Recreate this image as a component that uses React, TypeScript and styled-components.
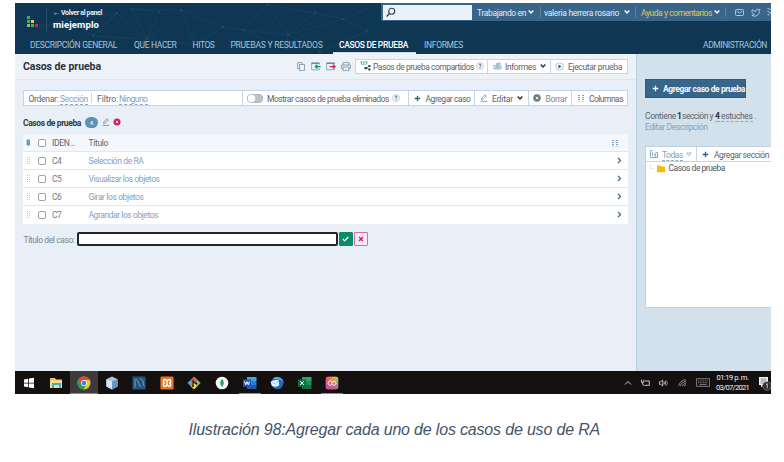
import React, { useLayoutEffect, useRef } from "react";
import styled, { createGlobalStyle, css } from "styled-components";

const Global = createGlobalStyle`
  * { box-sizing: border-box; }
  body { margin: 0; background: #fff; font-family: Roboto, "Liberation Sans", sans-serif; }
`;

const Label = styled.span<{ $w: number; $size?: number; $color?: string; $weight?: number; $ml?: number; $dotted?: boolean; $flush?: boolean }>`
  display: block;
  flex: none;
  width: ${(p) => p.$w}px;
  margin-left: ${(p) => p.$ml ?? 0}px;
  padding-top: ${(p) => (p.$flush ? 0 : 1)}px;
  font-size: ${(p) => p.$size ?? 8.5}px;
  line-height: 10px;
  font-weight: ${(p) => p.$weight ?? 400};
  color: ${(p) => p.$color ?? "#5c646c"};
  white-space: nowrap;
  ${(p) => p.$dotted && css`border-bottom: 1px dashed #8fa9c6; margin-bottom: -1px;`}
`;

type FitProps = React.ComponentProps<typeof Label> & { children: string };

/* Spreads the letters so that the text fills its label's width. */
function Fit({ children, ...rest }: FitProps) {
  const ref = useRef<HTMLSpanElement>(null);
  useLayoutEffect(() => {
    const el = ref.current;
    if (!el) return;
    el.style.letterSpacing = "0px";
    const natural = el.getBoundingClientRect().width;
    el.style.letterSpacing = `${(rest.$w - natural) / children.length}px`;
  }, [children, rest.$w]);
  return (
    <Label {...rest}>
      <span ref={ref}>{children}</span>
    </Label>
  );
}

const Page = styled.main`
  width: 784px;
  height: 462px;
  padding: 3px 13px 0 15px;
  overflow: hidden;
`;
const Screen = styled.div`
  width: 756px;
  height: 391px;
  overflow: hidden;
  display: flex;
  flex-direction: column;
`;
const Header = styled.header`
  position: relative;
  height: 51px;
  flex: none;
  background: #0f3754;
  display: flex;
  flex-direction: column;
  justify-content: space-between;
`;
const Mesh = styled.svg`
  position: absolute;
  inset: 0;
`;
const TopRow = styled.div`
  position: relative;
  display: flex;
  justify-content: space-between;
  height: 31px;
`;
const Brand = styled.div`
  display: flex;
  padding: 5px 0 0 12px;
`;
const Logo = styled.svg`
  display: block;
  flex: none;
  margin-top: 8px;
`;
const BrandText = styled.div`
  border-left: 1px solid #294d68;
  margin-left: 7px;
  padding-left: 6px;
  height: 25px;
`;
const Project = styled.div`
  margin-top: 2px;
`;
const UserBar = styled.div`
  display: flex;
  align-items: center;
  width: 390px;
  height: 18px;
  padding-left: 2px;
  background: #386589;
  overflow: hidden;
`;
const Search = styled.div`
  width: 89px;
  height: 15px;
  padding: 2px 3px;
  flex: none;
  background: #e9f1f9;
`;
const Sep = styled.i<{ $ml: number; $mr: number; $color?: string }>`
  flex: none;
  width: 1px;
  height: 10px;
  margin: 0 ${(p) => p.$mr}px 0 ${(p) => p.$ml}px;
  background: ${(p) => p.$color ?? "#5c83a2"};
`;
const Icon = styled.svg<{ $ml?: number }>`
  display: block;
  flex: none;
  margin-left: ${(p) => p.$ml ?? 0}px;
`;
const Nav = styled.nav`
  position: relative;
  display: flex;
  height: 19px;
  padding-left: 15px;
`;
const Tab = styled.div<{ $ml?: number; $active?: boolean }>`
  display: flex;
  align-items: center;
  padding-bottom: 1px;
  height: 19px;
  margin-left: ${(p) => p.$ml ?? 0}px;
  ${(p) => p.$active && css`padding: 0 8px 0 6px; border-bottom: 1px solid #f4f8fc; box-shadow: inset 0 -1px #c7d5e1;`}
`;
const Body = styled.div`
  display: flex;
  height: 317px;
  flex: none;
`;
const Main = styled.section`
  width: 622px;
  background: #e8eff6;
  border-right: 1px solid #b9d0e0;
`;
const TitleBar = styled.div`
  display: flex;
  align-items: center;
  height: 26px;
  padding: 0 8px 1px 8px;
  background: #edf2f8;
  border-bottom: 1px solid #dde6ef;
`;
const Group = styled.div<{ $ml?: number; $tall?: boolean }>`
  display: flex;
  flex: none;
  height: ${(p) => (p.$tall ? 16 : 15)}px;
  margin-left: ${(p) => p.$ml ?? 0}px;
  border: 1px solid #c3d6e6;
  background: #fff;
`;
const Cell = styled.div<{ $w: number; $pl: number }>`
  display: flex;
  align-items: center;
  flex: none;
  width: ${(p) => p.$w}px;
  padding-left: ${(p) => p.$pl}px;
  &:not(:last-child) { border-right: 1px solid #c3d6e6; }
`;
const ToolRow = styled.div`
  padding: 10px 8px 0;
  height: 26px;
`;
const SectionHead = styled.div`
  display: flex;
  align-items: center;
  height: 28px;
  padding: 4px 0 0 8px;
`;
const Badge = styled.span`
  width: 13px;
  height: 11px;
  margin-left: 4px;
  border-radius: 6px;
  background: #5c92ba;
  color: #e3edf5;
  font-size: 6px;
  font-weight: 700;
  line-height: 11px;
  text-align: center;
`;
const Table = styled.div`
  margin: 0 8px;
`;
const Row = styled.div<{ $head?: boolean }>`
  display: flex;
  align-items: center;
  height: 18px;
  padding-left: 3px;
  background: ${(p) => (p.$head ? "#f4f8fd" : "#fff")};
  border-bottom: 1px solid #e0e9f1;
  &:last-child { border-bottom-color: #fff; }
`;
const Check = styled.span`
  width: 8px;
  height: 8px;
  flex: none;
  border: 1px solid #9ea2a7;
  border-radius: 2px;
  background: #fff;
`;
const Lead = styled.span`
  display: flex;
  width: 12px;
  flex: none;
`;
const Ident = styled.span`
  display: flex;
  width: 36.5px;
  margin-left: 6px;
  flex: none;
`;
const End = styled.span<{ $mr: number }>`
  display: flex;
  margin-left: auto;
  margin-right: ${(p) => p.$mr}px;
`;
const FormRow = styled.div`
  display: flex;
  align-items: center;
  height: 14px;
  margin: 8px 0 0 8.5px;
`;
const Field = styled.div`
  width: 261px;
  height: 14px;
  margin-left: 2px;
  border: 2px solid #20252b;
  border-radius: 2px;
  background: #fff;
`;
const SquareButton = styled.div<{ $ok?: boolean }>`
  display: flex;
  align-items: center;
  justify-content: center;
  width: 14px;
  height: 14px;
  margin-left: 1px;
  border-radius: 1px;
  border: 1px solid ${(p) => (p.$ok ? "#0b8a66" : "#d76e9d")};
  background: ${(p) => (p.$ok ? "#0b8a66" : "#faeaf4")};
`;
const Side = styled.aside`
  width: 134px;
  padding: 25px 0 0 8px;
  background: #d2e1eb;
`;
const AddButton = styled.div`
  display: flex;
  align-items: center;
  width: 101px;
  height: 19px;
  padding-left: 6px;
  background: #38658a;
  border: 1px solid #2f5a7d;
`;
const Info = styled.div`
  display: flex;
  align-items: center;
  height: 11px;
`;
const InfoBlock = styled.div`
  padding-top: 12px;
  height: 48px;
`;
const Tree = styled.div`
  height: 162px;
  background: #fff;
  border: 1px solid #bdd1e0;
  border-right: 0;
`;
const TreeTools = styled.div`
  display: flex;
  height: 15px;
  border-bottom: 1px solid #c3d6e6;
`;
const TreeItem = styled.div`
  display: flex;
  align-items: center;
  height: 12px;
  padding-left: 4px;
`;
const Taskbar = styled.footer`
  display: flex;
  height: 23px;
  background: #13100f;
`;
const Task = styled.div<{ $active?: boolean; $line?: boolean }>`
  display: flex;
  flex: none;
  align-items: center;
  justify-content: center;
  width: 27.6px;
  height: 23px;
  padding-top: 1px;
  background: ${(p) => (p.$active ? "linear-gradient(#c65fc0, #c65fc0) bottom / 100% 1px no-repeat #3d3b3c" : "none")};
  ${(p) => p.$line && css`background: linear-gradient(#c65fc0, #c65fc0) center bottom / 22px 1px no-repeat;`}
`;
const Tray = styled.div`
  display: flex;
  align-items: center;
  margin-left: auto;
  width: 150px;
  flex: none;
`;
const Clock = styled.div`
  display: flex;
  flex-direction: column;
  margin-left: 6px;
  align-items: center;
`;
const Caption = styled.p`
  margin: 31px 0 0 173.5px;
  font-family: "Liberation Sans", Arial, sans-serif;
  font-style: italic;
  line-height: 20px;
`;

const blue = "#7f9fc6";
const sky = "#a9c3d8";

const Caret = ({ ml, color = "#fff" }: { ml: number; color?: string }) => (
  <Icon $ml={ml} width="6" height="6" viewBox="0 0 6 6"><path d="M.7 1.5 3 4l2.3-2.5" fill="none" stroke={color} strokeWidth="1.4" /></Icon>
);
const Plus = ({ color = "#2f5f86" }: { color?: string }) => (
  <Icon width="7" height="7" viewBox="0 0 7 7"><path d="M3.5.7v5.6M.7 3.5h5.6" stroke={color} strokeWidth="1.3" /></Icon>
);
const Help = ({ ml }: { ml: number }) => (
  <Icon $ml={ml} width="8" height="8" viewBox="0 0 8 8">
    <circle cx="4" cy="4" r="3.5" fill="#f8fbfd" stroke="#a9c0d3" strokeWidth=".7" />
    <path d="M2.9 3.2C2.9 1.7 5.1 1.8 5 3.1 5 3.8 4 3.8 4 4.7M4 5.4v.8" fill="none" stroke="#294c6a" strokeWidth=".9" />
  </Icon>
);
const Pencil = ({ ml = 0 }: { ml?: number }) => (
  <Icon $ml={ml} width="8" height="8" viewBox="0 0 8 8" fill="none" stroke="#6d9ac0" strokeWidth=".9">
    <path d="m1.5 5 .4-1.2L5 .8l1.3 1.1-3.2 3.3-1.7.5zM.5 7.4h6.8" />
  </Icon>
);
const Columns = () => (
  <Icon width="8" height="8" viewBox="0 0 8 8" fill="#7ba1c2">
    {[1, 3, 5].map((y) => <path key={y} d={`M1 ${y}h2v1H1zM5 ${y}h2v1H5z`} />)}
    <path d="M1 7h2v.5H1zM5 7h2v.5H5z" />
  </Icon>
);
const CrossDisc = ({ ml = 0, color, r = 3.4 }: { ml?: number; color: string; r?: number }) => (
  <Icon $ml={ml} width="8" height="8" viewBox="0 0 8 8">
    <circle cx="4" cy="4" r={r} fill={color} /><path d="m2.8 2.8 2.4 2.4m0-2.4L2.8 5.2" stroke="#fff" strokeWidth=".9" />
  </Icon>
);
const Grip = () => (
  <Icon width="5" height="7" viewBox="0 0 5 7" fill="#b4cade">
    {[0, 2, 4, 6].map((y) => <path key={y} d={`M1 ${y}h1v1h-1zM3 ${y}h1v1h-1z`} />)}
  </Icon>
);
const Window = ({ accent, out, ml }: { accent: string; out?: boolean; ml: number }) => (
  <Icon $ml={ml} width="10" height="9" viewBox="0 0 10 9" fill="none">
    <path d="M8.4 2.6V.8H.6v7h7.800V6.200" stroke="#7f9bb2" strokeWidth=".8" /><path d="M.6 1.4h7.800" stroke="#688ba8" strokeWidth="1.3" />
    <path d={out ? "M3.7 4.6h5M7 2.8l2 1.8-2 1.8" : "M9.6 4.6h-5M6.4 2.8l-2 1.8 2 1.8"} stroke={accent} strokeWidth="1.3" />
  </Icon>
);

const meshPoints = [[52, 17], [102, 10], [117, 6], [144, 9], [132, 36], [166, 7], [181, 42], [208, 24], [228, 27], [252, 2], [273, 32], [300, 10], [328, 16], [352, 28], [272, 45], [305, 49], [78, 33]];
const meshLines = "M20 25 52 17 102 10 78 33 132 36 117 6 144 9 132 36 166 7 181 42 208 24 166 7M208 24 228 27 252 2 273 32 228 27 272 45 273 32 328 16 300 10 252 2M300 10 273 32M328 16 352 28 305 49 273 32M52 17 78 33 102 10 132 36 181 42M328 16 365 0M117 6 166 7";

const rows = [
  { id: "C4", title: "Selección de RA", w: 55 },
  { id: "C5", title: "Visualizar los objetos", w: 71 },
  { id: "C6", title: "Girar los objetos", w: 55 },
  { id: "C7", title: "Agrandar los objetos", w: 69.5 },
];

const TaskSvg = ({ children }: { children: React.ReactNode }) => <Icon width="14" height="14" viewBox="0 0 14 14">{children}</Icon>;

function Office({ color, light, mid, path }: { color: string; light: string; mid: string; path: string }) {
  return (
    <TaskSvg>
      <path d="M4 1h9.5v4H4z" fill={light} /><path d="M4 5h9.5v4H4z" fill={mid} /><path d="M4 9h9.5v4H4z" fill={color} />
      <path d="M0 3.4h8v7.4H0z" fill={color} /><path d={path} fill="none" stroke="#fff" strokeWidth="1" />
    </TaskSvg>
  );
}

export default function App() {
  return (
    <Page>
      <Global />
      <Screen>
        <Header>
          <Mesh width="380" height="51" viewBox="0 0 380 51">
            <path d={meshLines} fill="none" stroke="#2b5673" strokeWidth=".5" opacity=".5" />
            {meshPoints.map(([x, y]) => <circle key={`${x}-${y}`} cx={x} cy={y} r="1" fill="#34617e" opacity=".5" />)}
          </Mesh>
          <TopRow>
            <Brand>
              <Logo width="12" height="12" viewBox="0 0 12 12">
                <path d="M0 0h3v3H0zM0 4h3v3H0zM4 8h3v3H4z" fill="#43ad55" /><path d="M0 8h3v3H0z" fill="#87c451" />
                <path d="M4 4h3v3H4z" fill="#e9c93f" /><path d="M8 8h3v3H8z" fill="#d51d58" />
              </Logo>
              <BrandText>
                <Fit $flush $w={49} $size={7} $weight={700} $color="#e3ecf4">← Volver al panel</Fit>
                <Project><Fit $flush $w={46} $size={9.5} $weight={700} $color="#fff">miejemplo</Fit></Project>
              </BrandText>
            </Brand>
            <UserBar>
              <Search>
                <Icon width="10" height="11" viewBox="0 0 10 11" fill="none" stroke="#28435a"><circle cx="5.7" cy="4.3" r="3" strokeWidth="1.1" /><path d="M3.5 6.6.7 9.6" strokeWidth="1.4" /></Icon>
              </Search>
              <Fit $ml={5} $w={49} $color="#e1ebf3">Trabajando en</Fit><Caret ml={2} />
              <Sep $ml={6} $mr={3} />
              <Fit $w={75} $color="#e1ebf3">valeria herrera rosario</Fit><Caret ml={5} />
              <Sep $ml={5} $mr={5} />
              <Fit $w={71} $color="#e7c352">Ayuda y comentarios</Fit><Caret ml={2} />
              <Sep $ml={5} $mr={9} />
              <Icon width="9" height="7" viewBox="0 0 9 7" fill="none" stroke="#b9cfdf" strokeWidth=".9"><rect x=".5" y=".5" width="8" height="6" rx="1" /><path d="m1.500 2 3 2 3-2" /></Icon>
              <Icon $ml={7} width="10" height="9" viewBox="0 0 24 22" fill="none" stroke="#b9cfdf" strokeWidth="2.2"><path d="M22 3s-.7 2-2 3.400c1.600 10-9.400 17.300-18 11.600 2.200.1 4.400-.6 6-2C3 14.500.5 8.600 3 4c2.200 2.600 5.600 4.100 9 4-.9-4.200 4-6.600 7-3.800 1.100 0 3-1.200 3-1.200z" /></Icon>
              <Icon $ml={6} width="8" height="8" viewBox="0 0 8 8" fill="none" stroke="#b9cfdf" strokeWidth=".9"><path d="M.5.7a7 7 0 0 1 7 7M.5 3.500a4 4 0 0 1 4 4" /><circle cx="1.3" cy="6.700" r=".5" /></Icon>
            </UserBar>
          </TopRow>
          <Nav>
            <Tab><Fit $w={87} $color={sky}>DESCRIPCIÓN GENERAL</Fit></Tab>
            <Tab $ml={17}><Fit $w={42.5} $color={sky}>QUE HACER</Fit></Tab>
            <Tab $ml={16}><Fit $w={22} $color={sky}>HITOS</Fit></Tab>
            <Tab $ml={16}><Fit $w={92} $color={sky}>PRUEBAS Y RESULTADOS</Fit></Tab>
            <Tab $ml={10.5} $active><Fit $w={69} $weight={500} $color="#fff">CASOS DE PRUEBA</Fit></Tab>
            <Tab $ml={8}><Fit $w={39} $color={sky}>INFORMES</Fit></Tab>
            <Tab $ml={240}><Fit $w={64} $color={sky}>ADMINISTRACIÓN</Fit></Tab>
          </Nav>
        </Header>
        <Body>
          <Main>
            <TitleBar>
              <Fit $w={78} $size={10.5} $weight={700} $color="#2a333d">Casos de prueba</Fit>
              <Icon $ml={196} width="8" height="9" viewBox="0 0 8 9" fill="none" stroke="#7893aa" strokeWidth=".8"><path d="M5 2V.6H.6v5.800H2" /><rect x="2.400" y="2.400" width="5" height="6" /></Icon>
              <Window ml={6} accent="#13916d" />
              <Window ml={5} accent="#d91e65" out />
              <Icon $ml={5} width="10" height="9" viewBox="0 0 10 9" fill="none" stroke="#7391aa" strokeWidth=".8"><path d="M2 3V.6h6V3M2 6.500H.6V3h8.800v3.500H8" /><path d="M2 5h6v3.400H2z" /></Icon>
              <Group $ml={4}>
                <Cell $w={132} $pl={4}>
                  <Icon width="11" height="10" viewBox="0 0 11 10">
                    <path d="M.5 1 1.400.6v3M2.700.8h1.500v1.200l-1.400 1.400h1.500M5.500.8h1.500L6.300 2c1.200 0 1 1.600-.9 1.300" fill="none" stroke="#21977a" strokeWidth=".8" />
                    <path d="m6 7 3.300-2M6 7l3.300 1.500" stroke="#263e56" strokeWidth=".7" /><path d="M4.500 6h2.300v2.300H4.500zM8.400 4h2v2h-2zM8.400 7.500h2v2h-2z" fill="#263e56" />
                  </Icon>
                  <Fit $ml={2} $w={101}>Pasos de prueba compartidos</Fit><Help ml={2} />
                </Cell>
                <Cell $w={63} $pl={5}>
                  <Icon width="9" height="8" viewBox="0 0 9 8" fill="none" stroke="#79a2c3" strokeWidth=".8"><path d="M1 6.500a1 1 0 0 1 0-3h1v3zM3.300 6.500V1.500h1.200v5M5.700 6.500V.8h1.200v5.700M7 3.500c2 0 2 3.500 0 3.500H2" /></Icon>
                  <Fit $ml={3} $w={31}>Informes</Fit><Caret ml={4} color="#263440" />
                </Cell>
                <Cell $w={76} $pl={4}>
                  <Icon width="9" height="9" viewBox="0 0 9 9"><circle cx="4.500" cy="4.500" r="3.800" fill="#f8fbfe" stroke="#94b7d3" strokeWidth=".7" /><path d="m3.500 2.600 2.800 1.900-2.800 1.900z" fill="#28587f" /></Icon>
                  <Fit $ml={4} $w={54}>Ejecutar prueba</Fit>
                </Cell>
              </Group>
            </TitleBar>
            <ToolRow>
              <Group $tall>
                <Cell $w={219} $pl={4.5}>
                  <Fit $w={30}>Ordenar:</Fit><Fit $ml={1.5} $w={28} $color={blue} $dotted>Sección</Fit>
                  <Sep $ml={3} $mr={5} $color="#c3d6e6" />
                  <Fit $w={21}>Filtro:</Fit><Fit $ml={1} $w={28.5} $color={blue} $dotted>Ninguno</Fit>
                </Cell>
                <Cell $w={166} $pl={4}>
                  <Icon width="16" height="9" viewBox="0 0 16 9"><rect x=".4" y=".4" width="15.200" height="8.200" rx="4.100" fill="#c0c1c3" stroke="#9c9fa3" strokeWidth=".7" /><circle cx="4.500" cy="4.500" r="3.700" fill="#fff" /></Icon>
                  <Fit $ml={4} $w={122}>Mostrar casos de prueba eliminados</Fit><Help ml={3} />
                </Cell>
                <Cell $w={66} $pl={5}><Plus /><Fit $ml={4.5} $w={45}>Agregar caso</Fit></Cell>
                <Cell $w={54} $pl={5}><Pencil /><Fit $ml={4} $w={21}>Editar</Fit><Caret ml={4} color="#222c35" /></Cell>
                <Cell $w={43} $pl={4}><CrossDisc color="#76797d" r={3.8} /><Fit $ml={4.5} $w={21.5} $color="#82878c">Borrar</Fit></Cell>
                <Cell $w={55} $pl={5}><Columns /><Fit $ml={4} $w={34}>Columnas</Fit></Cell>
              </Group>
            </ToolRow>
            <SectionHead>
              <Fit $w={58} $weight={700} $color="#303943">Casos de prueba</Fit>
              <Badge>4</Badge><Pencil ml={4} /><CrossDisc ml={3} color="#d41d53" r={3.5} />
            </SectionHead>
            <Table>
              <Row $head>
                <Lead><Icon width="5" height="7" viewBox="0 0 5 7"><rect x=".6" y=".4" width="3.300" height="6.200" rx=".6" fill="#5c90b9" /><path d="M2.200 1v5" stroke="#9abbd5" strokeWidth=".5" /></Icon></Lead>
                <Check />
                <Ident><Fit $w={23.5}>IDEN...</Fit></Ident>
                <Fit $w={19.5}>Título</Fit>
                <End $mr={9}><Columns /></End>
              </Row>
              {rows.map((row) => (
                <Row key={row.id}>
                  <Lead><Grip /></Lead>
                  <Check />
                  <Ident><Fit $w={9} $color="#747b83">{row.id}</Fit></Ident>
                  <Fit $w={row.w} $color={blue}>{row.title}</Fit>
                  <End $mr={6}><Icon width="5" height="7" viewBox="0 0 5 7"><path d="m1 .9 2.500 2.600L1 6.100" fill="none" stroke="#466787" strokeWidth="1.300" /></Icon></End>
                </Row>
              ))}
            </Table>
            <FormRow>
              <Fit $w={51} $color="#7d858d">Título del caso:</Fit>
              <Field />
              <SquareButton $ok><Icon width="7" height="6" viewBox="0 0 7 6"><path d="m.8 3 1.900 1.900L6.300 1" fill="none" stroke="#fff" strokeWidth="1.200" /></Icon></SquareButton>
              <SquareButton><Icon width="6" height="6" viewBox="0 0 6 6"><path d="m1 1 4 4m0-4L1 5" stroke="#bd2671" strokeWidth="1.400" /></Icon></SquareButton>
            </FormRow>
          </Main>
          <Side>
            <AddButton><Plus color="#fff" /><Fit $ml={4} $w={82} $weight={700} $color="#f3f7fa">Agregar caso de prueba</Fit></AddButton>
            <InfoBlock>
              <Info>
                <Fit $w={31}>Contiene</Fit><Fit $ml={1} $w={3.5} $weight={700} $color="#25323d">1</Fit>
                <Fit $ml={1.5} $w={31}>sección y</Fit><Fit $ml={2} $w={5} $weight={700} $color="#25323d" $dotted>4</Fit>
                <Fit $ml={1} $w={31.5} $dotted>estuches</Fit><Fit $ml={2} $w={2}>.</Fit>
              </Info>
              <Info><Fit $flush $w={62.5} $color={blue}>Editar Descripción</Fit></Info>
            </InfoBlock>
            <Tree>
              <TreeTools>
                <Cell $w={51} $pl={4}>
                  <Icon width="8" height="8" viewBox="0 0 8 8" fill="none" stroke="#6b97bb" strokeWidth=".8"><path d="M2.500.5H.5v7h7v-5h-2M2.500 2.300v3.300M4 4h2L4.500 6h1.700" /></Icon>
                  <Fit $ml={4} $w={20.5} $color={blue} $dotted>Todas</Fit>
                  <Icon $ml={3} width="6" height="5" viewBox="0 0 6 5"><path d="M.7 1h4.600L3 3.800z" fill="none" stroke="#8b9aa7" strokeWidth=".7" /></Icon>
                </Cell>
                <Cell $w={74} $pl={5}><Plus /><Fit $ml={5} $w={55}>Agregar sección</Fit></Cell>
              </TreeTools>
              <TreeItem>
                <Icon width="15" height="9" viewBox="0 0 15 9"><path d="M.5 0v4.500H5" fill="none" stroke="#d9dfe5" strokeWidth=".6" /><path d="M7 1.500h3.200l.8 1h4v5.700H7z" fill="#f6ba16" /></Icon>
                <Fit $flush $ml={3.5} $w={56.5} $color="#4e5760">Casos de prueba</Fit>
              </TreeItem>
            </Tree>
          </Side>
        </Body>
        <Taskbar>
          <Task><TaskSvg><path d="M2 3.500 6.200 2.800v3.900H2zM7 2.600l5-.8v4.900H7zM2 7.400h4.200v3.800L2 10.500zM7 7.400h5v4.900l-5-.8z" fill="#fff" /></TaskSvg></Task>
          <Task><TaskSvg><path d="M1 2h5l1 1.500h6V12H1z" fill="#e6c65d" /><path d="M1 4.500h12V12H1z" fill="#f7df8d" /><path d="M3 7h9v5H3z" fill="#39aed1" /><path d="M5 9h5v3H5z" fill="#f3dc88" /></TaskSvg></Task>
          <Task $active>
            <TaskSvg>
              <circle cx="7" cy="7" r="6.500" fill="#f2c42f" />
              <path d="M7 7 1.400 3.700A6.500 6.500 0 0 0 6.500 13.500L9.500 8.500z" fill="#309950" /><path d="M1.400 3.700A6.500 6.500 0 0 1 12.700 4H7L4.300 8.300z" fill="#db4939" />
              <circle cx="7" cy="7" r="3" fill="#fff" /><circle cx="7" cy="7" r="2.300" fill="#3c80dd" />
            </TaskSvg>
          </Task>
          <Task><TaskSvg><path d="m7 .5 5.600 2.700v7.300L7 13.500 1.400 10.500V3.200z" fill="#a8c5e7" /><path d="m1.400 3.200 5.600 2.400v7.900L1.400 10.500z" fill="#d5e3f2" /><path d="m12.600 3.200-5.600 2.400v7.900l5.600-3z" fill="#6c90c1" /></TaskSvg></Task>
          <Task><TaskSvg><path d="M.5.5h13v13H.5z" fill="#225579" /><path d="M3 11.500V4.500C3 2.500 5 3 6 5.500s1.500 4.800 3 5.200M8 2.500c2.500.5 3.800 3 3.200 5.500l1.300 2.500" fill="none" stroke="#8fb6cd" strokeWidth=".8" /></TaskSvg></Task>
          <Task><TaskSvg><rect x=".4" y=".5" width="13.200" height="13" rx="1.500" fill="#e87524" /><path d="M5 3.500C2.800 3.500 2.800 7 4.800 7 2.800 7 2.800 10.500 5 10.500S6 7.800 7 7.800s0 2.700 2 2.700S11.200 7 9.200 7c2 0 2-3.500-.2-3.500S8 6.200 7 6.200 7 3.500 5 3.500z" fill="none" stroke="#fff" strokeWidth="1.400" /></TaskSvg></Task>
          <Task><TaskSvg><path d="M7 .4 10.300 3.700 7 7 3.700 3.700z" fill="#e66a45" /><path d="M3.700 3.700 7 7l-3.300 3.300L.4 7z" fill="#689bd7" /><path d="M10.300 3.700 13.600 7l-3.300 3.300L7 7z" fill="#86c864" /><path d="M7 7l3.300 3.300L7 13.600 3.700 10.300z" fill="#f0d55c" /><path d="M6 3.500v7M6 5l3 2.500" stroke="#241b18" strokeWidth="1.100" /><circle cx="6" cy="10" r="1" fill="#241b18" /><circle cx="9.300" cy="7.500" r="1" fill="#241b18" /></TaskSvg></Task>
          <Task><TaskSvg><circle cx="7" cy="7" r="6.300" fill="#f8faf8" /><path d="M7 3c2.500 2.500 2.200 5.500 0 8-2.200-2.500-2.500-5.500 0-8z" fill="#25a064" /></TaskSvg></Task>
          <Task $line><Office color="#1f59b5" light="#45a0e8" mid="#2e7bd0" path="m1.500 5.400 1.200 3.400L4 5.700l1.300 3.100 1.200-3.400" /></Task>
          <Task><TaskSvg><circle cx="7.300" cy="7" r="6.200" fill="#1d69ba" /><path d="M3 2.500C6-.5 13 1 13.500 7c-1.200-2.700-3.500-4-6.500-3.300z" fill="#55aae8" /><path d="M.5 6c2-2 5-2.500 8-1.800l.8 4.800c-2 2.200-5 2.300-7.500.7z" fill="#e9f0f7" /><path d="m1 6 4 2 4-3" fill="none" stroke="#a9bed1" strokeWidth=".8" /></TaskSvg></Task>
          <Task><Office color="#136d42" light="#33a36a" mid="#218c55" path="m2.300 5.200 3.500 3.800m0-3.800L2.300 9" /></Task>
          <Task $line>
            <TaskSvg>
              <defs>
                <linearGradient id="cc" x1="0" y1="0" x2="1" y2="1"><stop stopColor="#ed3946" /><stop offset=".35" stopColor="#f2ab28" /><stop offset=".62" stopColor="#56ba75" /><stop offset="1" stopColor="#459de3" /></linearGradient>
                <linearGradient id="cm" x1="0" y1="1" x2="1" y2="0"><stop stopColor="#d73eca" /><stop offset=".45" stopColor="#e94778" stopOpacity=".7" /><stop offset="1" stopColor="#f0df36" stopOpacity=".6" /></linearGradient>
              </defs>
              <rect x=".8" y=".8" width="12.400" height="12.400" rx="2" fill="url(#cc)" /><rect x=".8" y=".8" width="12.400" height="12.400" rx="2" fill="url(#cm)" />
              <path d="M6.800 8.700a2.200 2.200 0 1 1 0-3.200l1.400 1.600M6 7.300l2 1.600a2 2 0 1 0 0-3.400L6.500 7" fill="none" stroke="#fff" strokeWidth=".9" />
            </TaskSvg>
          </Task>
          <Tray>
            <Icon $ml={3} width="8" height="6" viewBox="0 0 8 6"><path d="m1 4.500 3-3 3 3" fill="none" stroke="#e5e5e5" strokeWidth=".9" /></Icon>
            <Icon $ml={9} width="9" height="8" viewBox="0 0 9 8" fill="none" stroke="#ddd" strokeWidth=".9"><path d="M4 2h4.300v4.300H3.500M.5.700v2.500h2.300V.700M1.600 3v2.500L3.200 6.500" /></Icon>
            <Icon $ml={9} width="9" height="8" viewBox="0 0 9 8" fill="none" stroke="#ddd" strokeWidth=".8"><path d="M.5 2.700h1.300L3.700 1v6L1.800 5.400H.5zM5 2.700q.8 1.300 0 2.600M6.200 1.800q1.400 2.200 0 4.400" /><path d="M7.500.9q2 3.100 0 6.200" opacity=".5" /></Icon>
            <Icon $ml={10} width="9" height="8" viewBox="0 0 9 8" fill="none" stroke="#aaa" strokeWidth=".8"><path d="M.8 7A7 7 0 0 1 8 .8M2.500 7A5 5 0 0 1 8 2.700M4.200 7A4 4 0 0 1 8 4.500M6 7l2-1" /></Icon>
            <Icon $ml={9} width="14" height="9" viewBox="0 0 14 9" fill="none" stroke="#aaa" strokeWidth=".7"><path d="M.4.7h13.200v7.600H.4z" /><path d="M2 2.800h10M2 4.500h10" strokeDasharray="1 .7" /><path d="M3.500 6.400h7" /></Icon>
            <Clock>
              <Fit $flush $w={32} $size={7.5} $color="#f2f2f2">01:19 p. m.</Fit>
              <Fit $flush $w={33} $size={7.5} $color="#f2f2f2">03/07/2021</Fit>
            </Clock>
            <Icon $ml={9} width="13" height="16" viewBox="0 0 13 16">
              <path d="M1 2h9v8H5l-2 2.500V10H1z" fill="#f2f2f2" /><path d="M2.500 4h6M2.500 6h6M2.500 8h4" stroke="#555" strokeWidth=".7" />
              <circle cx="9" cy="11" r="4.300" fill="#2b2b2b" stroke="#888" strokeWidth=".7" /><path d="m8 9.500 1.200-.8v4.600" fill="none" stroke="#eee" strokeWidth=".8" />
            </Icon>
          </Tray>
        </Taskbar>
      </Screen>
      <Caption><Fit $flush $w={411.5} $size={16} $color="#44546a">Ilustración 98:Agregar cada uno de los casos de uso de RA</Fit></Caption>
    </Page>
  );
}
